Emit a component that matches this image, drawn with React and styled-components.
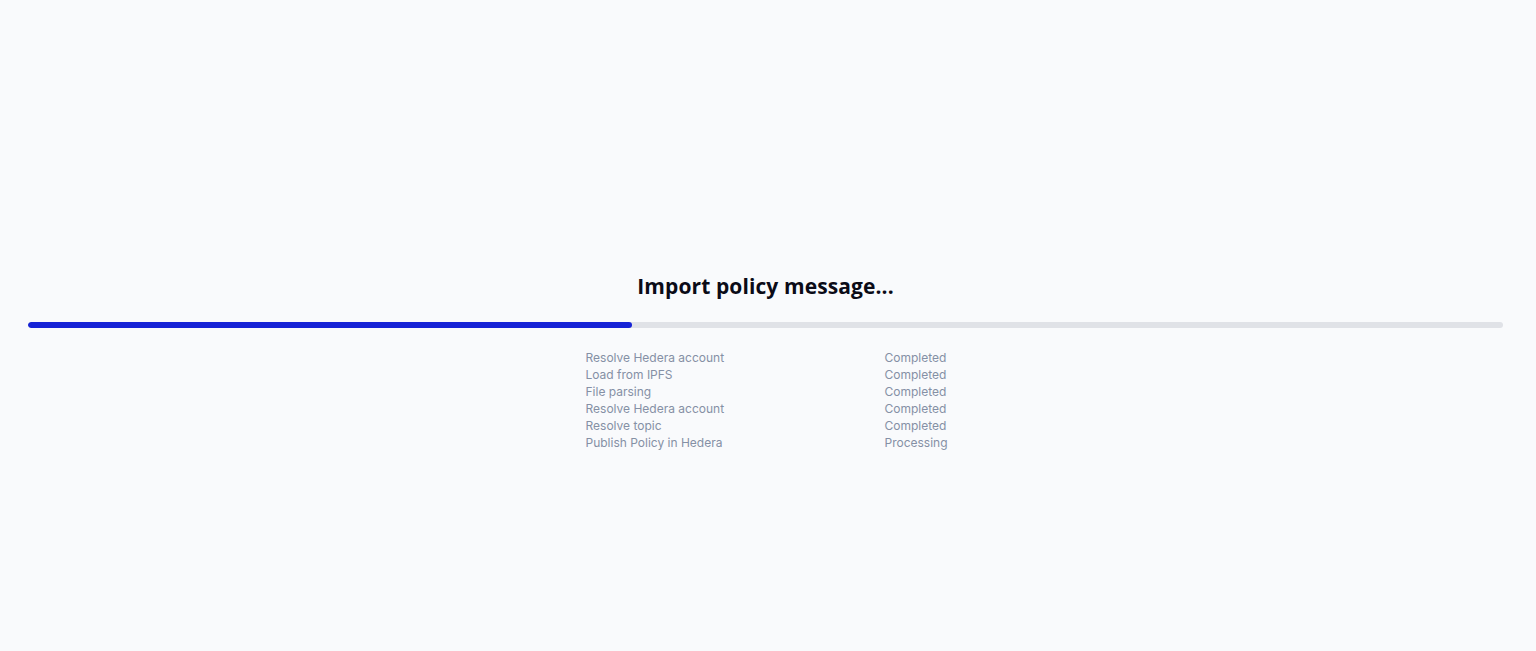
import React from 'react'
import styled, { createGlobalStyle } from 'styled-components'

const GlobalStyle = createGlobalStyle`
  html, body {
    margin: 0;
    padding: 0;
    background: #f9fafc;
  }
  body {
    font-family: Inter, "Noto Sans", sans-serif;
  }
`

const steps = [
  { name: 'Resolve Hedera account', status: 'Completed' },
  { name: 'Load from IPFS', status: 'Completed' },
  { name: 'File parsing', status: 'Completed' },
  { name: 'Resolve Hedera account', status: 'Completed' },
  { name: 'Resolve topic', status: 'Completed' },
  { name: 'Publish Policy in Hedera', status: 'Processing' },
]

const Page = styled.main`
  height: 651px;
  box-sizing: border-box;
  padding: 273px 33px 0 28px;
  display: flex;
  flex-direction: column;
  align-items: center;
`

const Title = styled.h1`
  margin: 0;
  font-family: "Open Sans", Inter, sans-serif;
  font-weight: 700;
  font-size: 21px;
  line-height: 26px;
  color: #0b0b17;
  letter-spacing: 0.1px;
`

const Track = styled.div`
  width: 100%;
  height: 6px;
  margin-top: 23px;
  border-radius: 3px;
  background: #e0e2e7;
  overflow: hidden;
`

const Fill = styled.div`
  height: 100%;
  border-radius: 3px;
  background: #1623d6;
`

const Steps = styled.div`
  width: 360px;
  margin-top: 21px;
  display: grid;
  grid-template-columns: 299px 1fr;
  font-size: 12px;
  line-height: 17px;
  color: #8590a5;
`

const Cell = styled.span`
  white-space: nowrap;
`

export default function App() {
  return (
    <>
      <GlobalStyle />
      <Page>
        <Title>Import policy message...</Title>
        <Track>
          <Fill style={{ width: `${(604 / 1475) * 100}%` }} />
        </Track>
        <Steps>
          {steps.map((s, i) => (
            <React.Fragment key={i}>
              <Cell>{s.name}</Cell>
              <Cell>{s.status}</Cell>
            </React.Fragment>
          ))}
        </Steps>
      </Page>
    </>
  )
}
